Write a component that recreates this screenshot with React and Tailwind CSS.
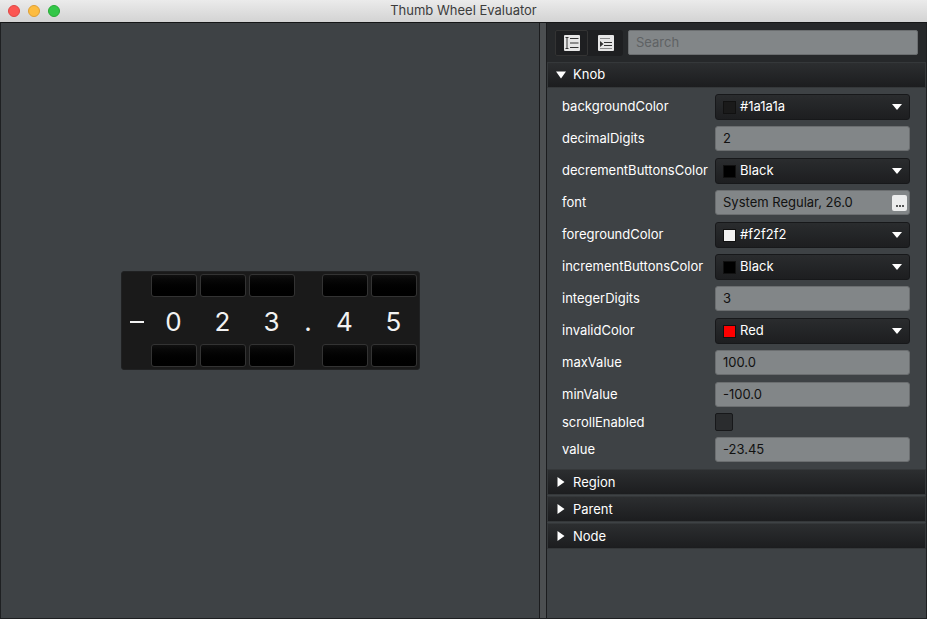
const fontStyle = "font-['Inter','Liberation_Sans',sans-serif]";

const Caret = ({ open }) => (
  <svg width="10" height="10" viewBox="0 0 10 10" className="shrink-0">
    {open ? <path d="M0 1.5h10L5 8.5z" fill="#fff" /> : <path d="M1.5 0v10L8.5 5z" fill="#fff" />}
  </svg>
);

const SectionHeader = ({ title, open }) => (
  <div className="h-[26px] mb-px flex items-center gap-[7px] pl-[8px] bg-gradient-to-b from-[#2c2e30] to-[#1c1d1f] border border-[#35383a] text-[13px] text-white">
    <Caret open={open} />
    <span className={open ? "" : "pt-[2px]"}>{title}</span>
  </div>
);

const ColorSelect = ({ color, label }) => (
  <div className="w-[195px] h-[26px] flex items-center pl-[7px] pr-[7px] rounded-[3px] bg-gradient-to-b from-[#2a2c2e] to-[#1d1e20] border border-[#17181a] text-[13px] text-white">
    <span className="w-[13px] h-[13px] border border-[#111] mr-[4px]" style={{ backgroundColor: color }} />
    <span className="flex-1">{label}</span>
    <svg width="10" height="6" viewBox="0 0 10 6"><path d="M0 0h10L5 6z" fill="#fff" /></svg>
  </div>
);

const TextField = ({ value, more }) => (
  <div className="relative w-[195px] h-[25px] flex items-center pl-[7px] rounded-[3px] bg-[#828688] border border-[#6b6e70] text-[13px] text-[#111]">
    {value}
    {more && (
      <span className="absolute right-[2px] top-[4px] w-[15px] h-[16px] rounded-[2px] bg-[#eceded] flex items-end justify-center gap-px pb-[4px]">
        <i className="w-[2px] h-[2px] rounded-full bg-[#222]" />
        <i className="w-[2px] h-[2px] rounded-full bg-[#222]" />
        <i className="w-[2px] h-[2px] rounded-full bg-[#222]" />
      </span>
    )}
  </div>
);

const Row = ({ label, rowClass = "h-[26px]", labelClass = "leading-[25px]", children }) => (
  <div className={`flex items-start justify-between pl-[15px] pr-[16px] ${rowClass}`}>
    <span className={`text-[13px] text-white ${labelClass}`}>{label}</span>
    {children}
  </div>
);

const StepButton = () => (
  <div className="h-[23px] rounded-[3px] bg-gradient-to-b from-[#101010] to-black border border-[#333]" />
);

const Digit = ({ children }) => (
  <div className="flex items-center justify-center text-[26px] leading-none text-[#f2f2f2] pt-[2px]">{children}</div>
);

const Knob = () => (
  <div className="w-[299px] h-[99px] py-[2px] pl-[29px] pr-px rounded-[3px] bg-[#1a1a1a] border border-[#202122] relative grid grid-cols-[46px_46px_46px_21px_46px_46px] grid-rows-[23px_1fr_23px] gap-x-[3px]">
    <StepButton /><StepButton /><StepButton /><div /><StepButton /><StepButton />
    <Digit>0</Digit><Digit>2</Digit><Digit>3</Digit><Digit>.</Digit><Digit>4</Digit><Digit>5</Digit>
    <StepButton /><StepButton /><StepButton /><div /><StepButton /><StepButton />
    <span className="absolute left-[8px] top-[49px] w-[14px] h-[2px] bg-[#f2f2f2]" />
  </div>
);

const ListIcon = () => (
  <svg width="16" height="16" viewBox="0 0 16 16">
    <rect width="16" height="16" rx="1" fill="#e6e6e6" />
    <path d="M6 3.5h8.5M6 8h8.5M6 12.5h8.5M3 2.5v11M1.5 2.5h3M1.5 13.5h3" stroke="#333" strokeWidth="1" fill="none" />
  </svg>
);

const IndentIcon = () => (
  <svg width="16" height="16" viewBox="0 0 16 16">
    <rect width="16" height="16" rx="1" fill="#e6e6e6" />
    <path d="M2 3.5h10" stroke="#8a8a8a" strokeWidth="1" fill="none" />
    <path d="M6 7.5h8M6 10.5h8" stroke="#333" strokeWidth="1" fill="none" />
    <path d="M2 13.5h12" stroke="#8a8a8a" strokeWidth="1" fill="none" />
    <path d="M2 6v6L5.5 9z" fill="#333" />
  </svg>
);

export default function App() {
  return (
    <div className={`w-[927px] h-[619px] flex flex-col overflow-hidden bg-[#3e4245] ${fontStyle}`}>
      <div className="relative h-[22px] shrink-0 flex items-center justify-center bg-gradient-to-b from-[#ebebeb] to-[#d3d3d3] text-[13px] text-[#3c3c3c]">
        <div className="absolute left-[8px] top-[5px] flex gap-[8px]">
          <span className="w-[12px] h-[12px] rounded-full bg-[#fc5753] border border-[#df4744]" />
          <span className="w-[12px] h-[12px] rounded-full bg-[#fdbc40] border border-[#de9f34]" />
          <span className="w-[12px] h-[12px] rounded-full bg-[#33c748] border border-[#27aa35]" />
        </div>
        Thumb Wheel Evaluator
      </div>
      <div className="flex-1 flex border border-t-[#151617] border-[#1e2022] min-h-0">
        <div className="w-[538px] flex items-center justify-center">
          <Knob />
        </div>
        <div className="w-[8px] bg-[#4c4f51] border-x border-[#1b1c1e]" />
        <div className="flex-1 flex flex-col">
          <div className="h-[39px] flex items-center pl-[8px] pr-[8px] gap-[5px] bg-[#26282a]">
            <div className="w-[68px] h-[26px] flex rounded-[3px] bg-[#1e1f21]">
              <div className="w-[33px] flex items-center justify-center border border-[#333] rounded-[2px]"><ListIcon /></div>
              <div className="flex-1 flex items-center justify-center"><IndentIcon /></div>
            </div>
            <div className="flex-1 h-[25px] flex items-center pl-[7px] rounded-[2px] bg-[#828688] border border-[#6b6e70] text-[13px] text-[#5f6264]">Search</div>
          </div>
          <SectionHeader title="Knob" open />
          <div className="flex flex-col gap-[6px] pt-[5px] pb-[7px]">
            <Row label="backgroundColor"><ColorSelect color="#1a1a1a" label="#1a1a1a" /></Row>
            <Row label="decimalDigits"><TextField value="2" /></Row>
            <Row label="decrementButtonsColor"><ColorSelect color="#000" label="Black" /></Row>
            <Row label="font"><TextField value="System Regular, 26.0" more /></Row>
            <Row label="foregroundColor"><ColorSelect color="#f2f2f2" label="#f2f2f2" /></Row>
            <Row label="incrementButtonsColor"><ColorSelect color="#000" label="Black" /></Row>
            <Row label="integerDigits"><TextField value="3" /></Row>
            <Row label="invalidColor"><ColorSelect color="#f00" label="Red" /></Row>
            <Row label="maxValue"><TextField value="100.0" /></Row>
            <Row label="minValue" rowClass="h-[25px]"><TextField value="-100.0" /></Row>
            <Row label="scrollEnabled" rowClass="h-[18px]" labelClass="leading-[18px]">
              <div className="w-[195px]"><div className="w-[18px] h-[18px] rounded-[2px] bg-[#2a2c2e] border border-[#17181a]" /></div>
            </Row>
            <Row label="value" rowClass="h-[25px]"><TextField value="-23.45" /></Row>
          </div>
          <SectionHeader title="Region" />
          <SectionHeader title="Parent" />
          <SectionHeader title="Node" />
        </div>
      </div>
    </div>
  );
}
